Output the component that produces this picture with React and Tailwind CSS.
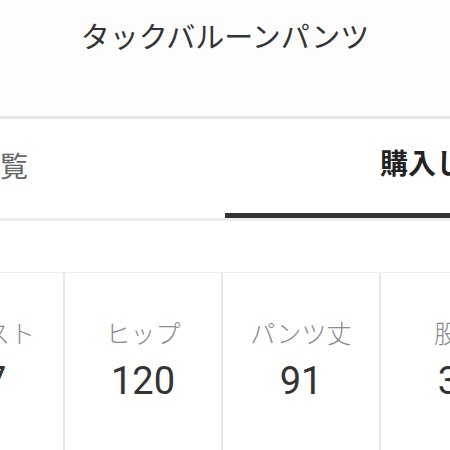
export default function App() {
  const cards = [
    { label: "ウエスト", value: "77" },
    { label: "ヒップ", value: "120" },
    { label: "パンツ丈", value: "91" },
    { label: "股下", value: "34" },
  ];
  return (
    <div
      className="w-[450px] h-[450px] overflow-hidden bg-white flex flex-col"
      style={{ fontFamily: "Roboto, 'Noto Sans CJK JP', sans-serif" }}
    >
      <div className="h-[116px] shrink-0 flex justify-center pt-[18px] bg-[#fdfdfd]">
        <h1 className="text-[29px] leading-[40px] text-[#333] font-normal whitespace-nowrap">
          タックバルーンパンツ
        </h1>
      </div>
      <div className="h-[3px] shrink-0 bg-[#e6e6e6]" />
      <div className="h-[99px] shrink-0 flex -ml-[225px] w-[900px]">
        <div className="w-[450px] flex items-center justify-center">
          <span className="text-[28px] leading-[40px] text-[#666] whitespace-nowrap pb-[2px]">閲覧</span>
        </div>
        <div className="w-[450px] flex flex-col">
          <div className="flex-1 flex items-center justify-center">
            <span className="text-[28px] leading-[40px] text-[#222] font-bold whitespace-nowrap pb-[2px]">購入した服</span>
          </div>
          <div className="h-[5px] bg-[#333]" />
        </div>
      </div>
      <div className="h-[3px] shrink-0 bg-[#eeeeee]" />
      <div className="flex-1 pt-[51px]">
        <div className="flex -ml-[95px] w-[632px] h-full border-t border-[#efefef]">
          {cards.map((c) => (
            <div
              key={c.label}
              className="w-[158px] shrink-0 border-l-2 border-[#e8e8e8] flex flex-col items-center pt-[45px]"
            >
              <span className="text-[25px] leading-[34px] text-[#8a8a8a] font-light whitespace-nowrap">{c.label}</span>
              <span className="text-[38px] leading-[46px] text-[#333] mt-[6px]">{c.value}</span>
            </div>
          ))}
        </div>
      </div>
    </div>
  );
}
